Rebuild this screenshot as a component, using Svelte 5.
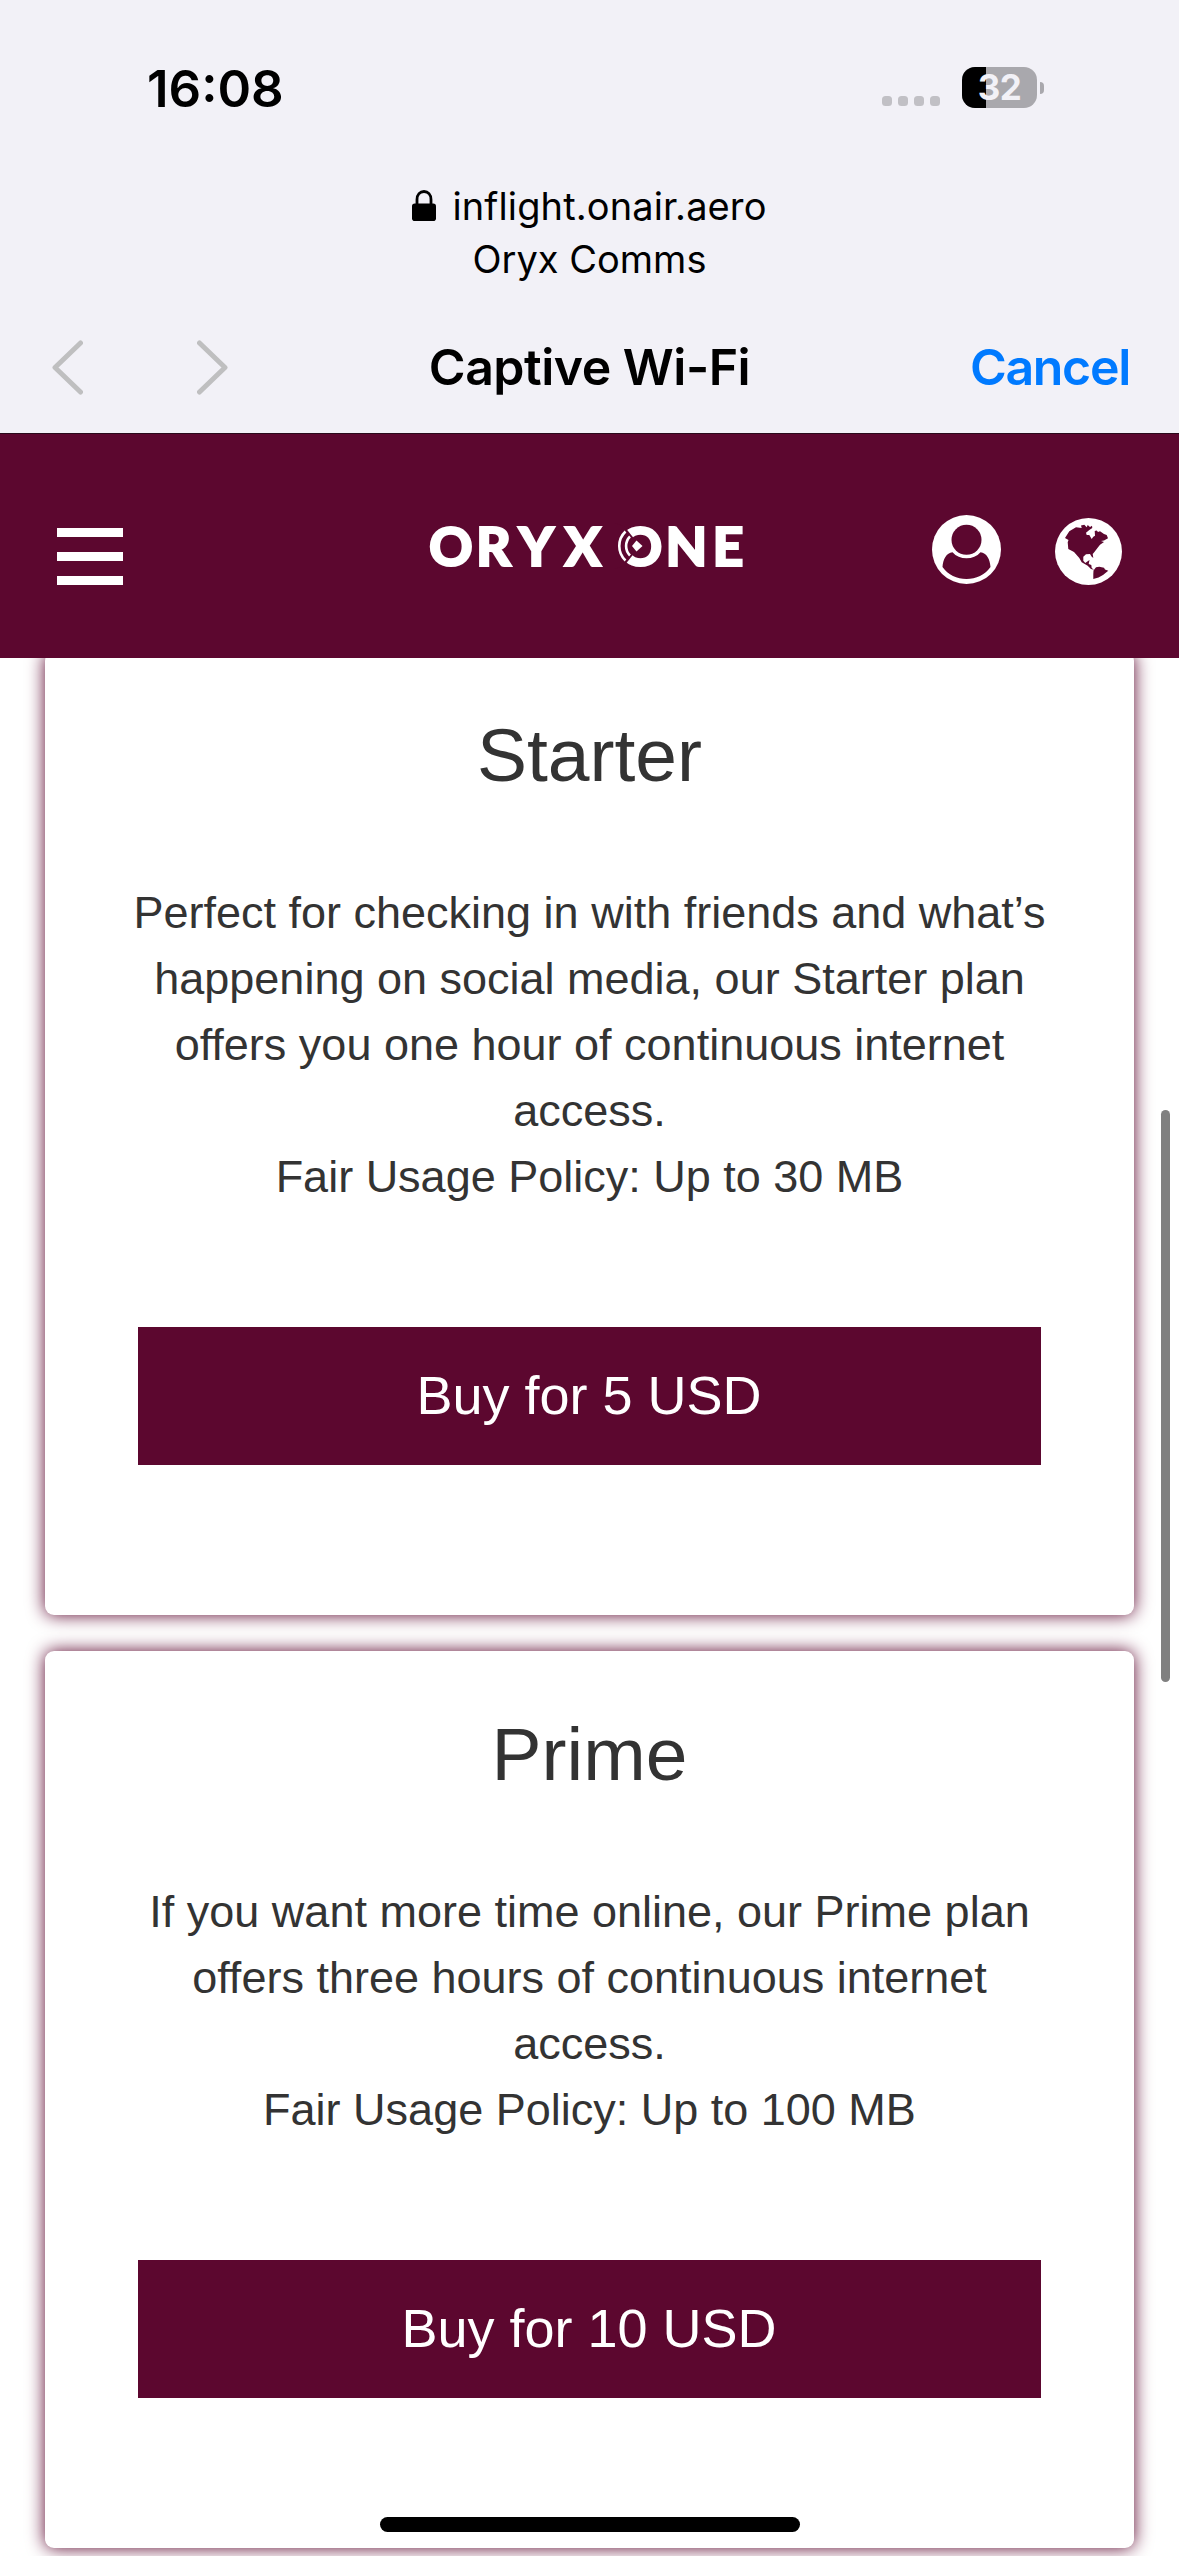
<script lang="ts">
  type Plan = {
    name: string;
    description: string;
    policy: string;
    price: string;
  };

  const plans: Plan[] = [
    {
      name: 'Starter',
      description:
        'Perfect for checking in with friends and what’s happening on social media, our Starter plan offers you one hour of continuous internet access.',
      policy: 'Fair Usage Policy: Up to 30 MB',
      price: '5 USD'
    },
    {
      name: 'Prime',
      description:
        'If you want more time online, our Prime plan offers three hours of continuous internet access.',
      policy: 'Fair Usage Policy: Up to 100 MB',
      price: '10 USD'
    }
  ];

  const signalDots = [0, 1, 2, 3];
  const batteryLevel = 32;
</script>

<div class="phone">
  <header class="system">
    <div class="status">
      <span class="status__time">16:08</span>
      <div class="status__right">
        <div class="signal">
          {#each signalDots as dot (dot)}
            <i></i>
          {/each}
        </div>
        <div class="battery">
          <div class="battery__body">
            <span class="battery__fill" style={`width:${batteryLevel}%`}></span>
            <span class="battery__text">{batteryLevel}</span>
          </div>
          <span class="battery__cap"></span>
        </div>
      </div>
    </div>

    <div class="address">
      <p>
        <svg class="lock" viewBox="0 0 24 31" aria-hidden="true">
          <path d="M5 15V9.5C5 4.5 8 1.5 12 1.5s7 3 7 8V15" fill="none" stroke="#000" stroke-width="2.8" />
          <rect x="0" y="13.5" width="24" height="17.5" rx="2.8" />
        </svg>
        <span class="address__host">inflight.onair.aero</span>
      </p>
      <p class="address__network">Oryx Comms</p>
    </div>

    <nav class="toolbar">
      <div class="toolbar__arrows">
        <svg viewBox="0 0 31 55" aria-label="Back"><path d="M28.5 3 3 27.5 28.5 52" /></svg>
        <svg viewBox="0 0 31 55" aria-label="Forward"><path d="M2.5 3 28 27.5 2.5 52" /></svg>
      </div>
      <h1>Captive Wi-Fi</h1>
      <button class="toolbar__cancel" type="button">Cancel</button>
    </nav>
  </header>

  <div class="site">
    <button class="menu" type="button" aria-label="Menu">
      <i></i>
      <i></i>
      <i></i>
    </button>

    <svg class="logo" viewBox="0 0 316 42" role="img" aria-label="Oryx One">
      <g class="logo__text">
        <text x="-1 46 88.5 134.5" y="40.5">ORYX</text>
        <text x="188.500 235.500 282.500" y="40.5">ONE</text>
      </g>
      <path class="logo__cut" d="M210 21 194 1 184 -2V44l10-3z" />
      <path class="logo__wave" d="M195.5 6.5a20 20 0 0 0 0 29" />
      <path class="logo__wave" d="M200 11.500a13.500 13.500 0 0 0 0 19" />
      <path class="logo__dot" d="M202 21l4.500-5.500 6 5.500-6 5.500z" />
    </svg>

    <div class="actions">
      <svg class="account" viewBox="0 0 69 69" aria-label="Account">
        <circle cx="34.500" cy="34.500" r="34.500" />
        <circle class="ink" cx="34.500" cy="24.800" r="15" />
        <path
          class="ink"
          d="M20.500 37.300c-6 .5-9.500 7-10 14.700 5.500 7.800 14.500 12 24 12s18.500-4.200 24-12c-.5-7.700-4-14.200-10-14.700-3.500 4-8.500 6-14 6s-10.500-2-14-6z"
        />
      </svg>
      <svg class="globe" viewBox="0 0 67 67" aria-label="Language">
        <circle cx="33.500" cy="33.500" r="33.500" />
        <path
          class="ink"
          d="M10 20 14.300 13.300 21 9.300 26.700 10 26 7.500 29.300 6.700 31.700 9.300 32.700 7 35 9 37 7.700 37.300 10 34.300 12 31 14.700 31.700 17 34.300 17 36.700 21 38.300 18.700 40 17.700 39.700 13 41.700 12.500 43 14 45 13.300 49 16 51.700 17 53 20.300 49 22.500 46 23 49 24 45 26.700 41.700 31 39 34.500 37.700 36 38.300 40 36.500 38.500 35 36 31 36.300 28.300 38.700 28.300 42.700 30.300 45 32.700 43.300 34.500 42 33.700 46 36.300 47 36.700 50 39 51.700 36 51 32.700 47.700 26.700 44.300 24.300 40 19 34 13.300 31 12.700 24.300 13.500 22z"
        />
        <path class="ink" d="M38.500 52.500 41 49.300 44.300 48.700 49 49.700 50 51.500 53.300 52.700 48 57 43.500 59.500 38.300 61 38.300 56z" />
      </svg>
    </div>
  </div>

  <main class="plans">
    {#each plans as plan (plan.name)}
      <section class="card">
        <h2>{plan.name}</h2>
        <p class="card__text">{plan.description}<br />{plan.policy}</p>
        <button class="card__buy" type="button">Buy for {plan.price}</button>
      </section>
    {/each}
  </main>

  <div class="scrollbar"></div>
  <div class="home-indicator"></div>
</div>

<style>
  :global(body) {
    margin: 0;
    background: #fff;
  }

  .phone {
    --brand: #5c072f;
    --bar: #f2f1f7;

    position: relative;
    width: 1179px;
    height: 2556px;
    overflow: hidden;
    display: flex;
    flex-direction: column;
    background: #fff;
    color: #333;
    font-family: 'Liberation Sans', Arial, sans-serif;
  }

  h1,
  h2,
  p {
    margin: 0;
    font-weight: 400;
  }

  button {
    border: 0;
    padding: 0;
    background: none;
    font: inherit;
  }

  svg {
    display: block;
  }

  .system {
    box-sizing: border-box;
    height: 433px;
    flex: none;
    background: var(--bar);
    color: #000;
    font-family: Inter, sans-serif;
  }

  .status {
    box-sizing: border-box;
    height: 176px;
    padding: 0 135px 0 147px;
    display: flex;
    justify-content: space-between;
    align-items: center;
  }

  .status__time {
    font-size: 51px;
    font-weight: 600;
  }

  .status__right {
    display: flex;
    align-items: center;
    gap: 22px;
    padding-bottom: 1px;
  }

  .signal {
    display: flex;
    gap: 6px;
    padding-top: 27px;
  }

  .signal i {
    width: 10px;
    height: 10px;
    border-radius: 3.5px;
    background: #c1c0c5;
  }

  .battery {
    display: flex;
    align-items: center;
    gap: 3px;
  }

  .battery__body {
    position: relative;
    width: 75px;
    height: 41px;
    border-radius: 13px;
    overflow: hidden;
    background: #a9a8ad;
  }

  .battery__fill {
    display: block;
    height: 100%;
    background: #000;
  }

  .battery__text {
    position: absolute;
    inset: 0;
    color: var(--bar);
    font-size: 35px;
    font-weight: 700;
    line-height: 41px;
    text-align: center;
    letter-spacing: -0.5px;
  }

  .battery__cap {
    width: 4px;
    height: 12px;
    border-radius: 0 4px 4px 0;
    background: #a9a8ad;
  }

  .address {
    height: 112px;
    padding-top: 4px;
    display: flex;
    flex-direction: column;
    align-items: center;
    font-size: 38px;
    line-height: 53px;
  }

  .address p {
    display: flex;
    align-items: center;
    gap: 16px;
  }

  .address__host {
    letter-spacing: 0.12px;
  }

  .lock {
    width: 24px;
    height: 31px;
    margin-bottom: 3px;
  }

  .toolbar {
    height: 150px;
    padding: 0 49px 0 52px;
    display: grid;
    grid-template-columns: 1fr auto 1fr;
    align-items: center;
    font-size: 50px;
  }

  .toolbar__arrows {
    display: flex;
    gap: 114px;
  }

  .toolbar__arrows svg {
    width: 31px;
    height: 55px;
  }

  .toolbar__arrows path {
    fill: none;
    stroke: #bfbfc0;
    stroke-width: 5px;
    stroke-linecap: round;
    stroke-linejoin: round;
  }

  h1 {
    margin-right: 3px;
    font-size: 50px;
    font-weight: 600;
    letter-spacing: -0.5px;
  }

  .toolbar__cancel {
    justify-self: end;
    color: #007aff;
    font-weight: 600;
    letter-spacing: -1.3px;
  }

  .site {
    position: relative;
    z-index: 1;
    box-sizing: border-box;
    height: 225px;
    flex: none;
    padding: 0 57px;
    display: grid;
    grid-template-columns: 1fr 316px 1fr;
    align-items: start;
    border-top: 1px solid #2a0a1b;
    background: var(--brand);
  }

  .menu {
    width: 66px;
    margin-top: 94px;
    display: grid;
    gap: 15px;
  }

  .menu i {
    height: 9px;
    background: #fff;
  }

  .logo {
    width: 316px;
    height: 42px;
    margin: 91px 0 0 -2px;
    overflow: visible;
  }

  .logo__text {
    fill: #fff;
    stroke: #fff;
    stroke-width: 2;
    font-family: Lato, sans-serif;
    font-size: 54px;
    font-weight: 900;
  }

  .logo__cut {
    fill: var(--brand);
  }

  .logo__wave {
    fill: none;
    stroke: #fff;
    stroke-width: 2.6;
  }

  .logo__dot {
    fill: #fff;
  }

  .actions {
    justify-self: end;
    margin-top: 81px;
    display: flex;
    gap: 54px;
  }

  .actions svg {
    fill: #fff;
  }

  .actions .ink {
    fill: var(--brand);
  }

  .account {
    width: 69px;
    height: 69px;
  }

  .globe {
    width: 67px;
    height: 67px;
    margin-top: 3px;
  }

  .plans {
    margin-top: -6px;
    padding: 0 45px;
    display: grid;
    gap: 36px;
  }

  .card {
    padding: 59px 75px 150px 75px;
    border-radius: 9px;
    background: #fff;
    box-shadow: 0 0 18px var(--brand);
    text-align: center;
  }

  h2 {
    font-size: 75px;
    line-height: 88px;
  }

  .card__text {
    margin-top: 81px;
    font-size: 45px;
    line-height: 66px;
  }

  .card__buy {
    display: block;
    width: 903px;
    height: 138px;
    margin: 117px auto 0;
    padding: 0 1px 2px 0;
    background: var(--brand);
    color: #fff;
    font-size: 54px;
  }

  .scrollbar {
    position: absolute;
    z-index: 2;
    top: 1110px;
    right: 9px;
    width: 9px;
    height: 572px;
    border-radius: 5px;
    background: #808080;
  }

  .home-indicator {
    position: absolute;
    z-index: 2;
    left: 380px;
    bottom: 24px;
    width: 420px;
    height: 15px;
    border-radius: 8px;
    background: #000;
  }
</style>
